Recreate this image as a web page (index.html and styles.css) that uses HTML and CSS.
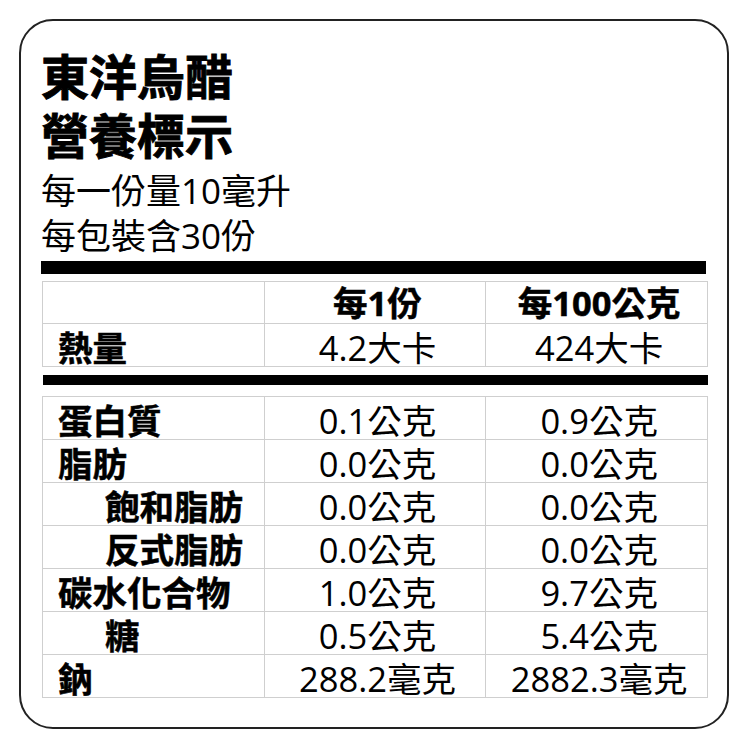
FILE: index.html
```html
<!DOCTYPE html>
<html lang="zh-Hant">
<head>
<meta charset="utf-8">
<link rel="stylesheet" href="styles.css">
</head>
<body>
<div class="card">
  <h1 class="title"><span class="line">東洋烏醋</span><span class="line">營養標示</span></h1>
  <p class="serving"><span class="line">每一份量10毫升</span><span class="line">每包裝含30份</span></p>
  <div class="bar bar-top"></div>
  <table class="facts">
    <tr><th></th><th>每1份</th><th>每100公克</th></tr>
    <tr><td class="label">熱量</td><td>4.2大卡</td><td>424大卡</td></tr>
  </table>
  <div class="bar bar-mid"></div>
  <table class="facts">
    <tr><td class="label">蛋白質</td><td>0.1公克</td><td>0.9公克</td></tr>
    <tr><td class="label">脂肪</td><td>0.0公克</td><td>0.0公克</td></tr>
    <tr><td class="label sub">飽和脂肪</td><td>0.0公克</td><td>0.0公克</td></tr>
    <tr><td class="label sub">反式脂肪</td><td>0.0公克</td><td>0.0公克</td></tr>
    <tr><td class="label">碳水化合物</td><td>1.0公克</td><td>9.7公克</td></tr>
    <tr><td class="label sub">糖</td><td>0.5公克</td><td>5.4公克</td></tr>
    <tr><td class="label">鈉</td><td>288.2毫克</td><td>2882.3毫克</td></tr>
  </table>
</div>
</body>
</html>
```
FILE: styles.css
```css
html, body {
  margin: 0;
  padding: 0;
  background: #fff;
}
body {
  font-family: "Open Sans", "Noto Sans CJK TC", sans-serif;
  color: #000;
}
.card {
  box-sizing: border-box;
  width: 710px;
  height: 710px;
  margin: 19px 0 0 19px;
  border: 2px solid #222;
  border-radius: 34px;
  padding: 24px 20px 0 20px;
}
.line {
  display: block;
}
.title {
  margin: 0;
  font-family: "Noto Sans CJK TC", sans-serif;
  font-weight: 700;
  font-size: 48px;
  line-height: 59px;
  -webkit-text-stroke: 0.9px #000;
}
.serving {
  margin: 5px 0 0 0;
  font-size: 35px;
  line-height: 45px;
  font-weight: 400;
}
.bar {
  background: #000;
}
.bar-top {
  height: 13px;
  margin-top: 3px;
  width: 665px;
}
.bar-mid {
  height: 10px;
  margin: 8px 0 0 2px;
  width: 665px;
}
.facts {
  border-collapse: collapse;
  width: 666px;
  table-layout: fixed;
  margin-left: 1px;
}
.bar-top + .facts {
  margin-top: 7px;
}
.bar-mid + .facts {
  margin-top: 11px;
}
.facts th, .facts td {
  border: 1px solid #cfcfcf;
  box-sizing: border-box;
  height: 42.4px;
  padding: 6px 0 0 5px;
  font-size: 34.5px;
  line-height: 36px;
  text-align: center;
  vertical-align: top;
  white-space: nowrap;
}
.facts th {
  font-weight: 700;
  padding-top: 1px;
  line-height: 40px;
  -webkit-text-stroke: 0.5px #000;
}
.facts td {
  font-weight: 400;
}
.facts td.label {
  text-align: left;
  font-weight: 700;
  padding-left: 15px;
  -webkit-text-stroke: 0.5px #000;
}
.facts td.label.sub {
  padding-left: 62px;
}
```
